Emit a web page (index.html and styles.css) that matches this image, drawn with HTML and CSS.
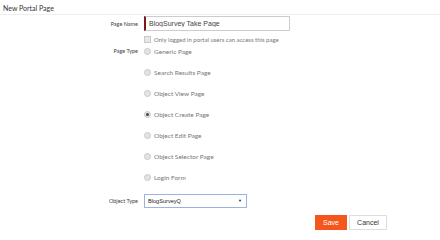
FILE: index.html
```html
<!DOCTYPE html>
<html lang="en">
<head>
    <meta charset="UTF-8">
    <meta name="viewport" content="width=device-width, initial-scale=1.0">
    <title>New Portal Page</title>
    <link rel="stylesheet" href="styles.css">
</head>
<body>
    <div class="header">New Portal Page</div>
    <form class="page-form">
        <label class="field-label" for="pageName">Page Name</label>
        <input class="text-input" type="text" id="pageName" value="BlogSurvey Take Page">

        <span></span>
        <label class="check-line"><span class="checkbox"></span>Only logged in portal users can access this page</label>

        <span class="field-label top">Page Type</span>
        <div class="radio-list">
            <label class="radio-item"><span class="radio"></span>Generic Page</label>
            <label class="radio-item"><span class="radio"></span>Search Results Page</label>
            <label class="radio-item"><span class="radio"></span>Object View Page</label>
            <label class="radio-item"><span class="radio checked"></span>Object Create Page</label>
            <label class="radio-item"><span class="radio"></span>Object Edit Page</label>
            <label class="radio-item"><span class="radio"></span>Object Selector Page</label>
            <label class="radio-item"><span class="radio"></span>Login Form</label>
        </div>

        <label class="field-label select-label" for="objectType">Object Type</label>
        <div class="select-wrap">
            <select class="select-input" id="objectType">
                <option>BlogSurveyQ</option>
            </select>
            <span class="select-arrow">&#9660;</span>
        </div>
    </form>
    <div class="actions">
        <button type="button" class="btn btn-save">Save</button>
        <button type="button" class="btn btn-cancel">Cancel</button>
    </div>
</body>
</html>
```

FILE: styles.css
```css
body {
    margin: 0;
    font-family: Lato, "Open Sans", sans-serif;
    color: #555;
    background-color: #fff;
}
.header {
    height: 15px;
    box-sizing: border-box;
    padding: 4px 3px 0;
    font-size: 7px;
    color: #333;
    border-bottom: 1px solid #eee;
}
.page-form {
    display: grid;
    grid-template-columns: 138px 146px;
    column-gap: 6px;
    row-gap: 4px;
    padding-top: 1px;
}
.field-label {
    font-size: 5.5px;
    color: #444;
    text-align: right;
    align-self: center;
}
.field-label.top {
    align-self: start;
    line-height: 8px;
}
.text-input {
    height: 15px;
    box-sizing: border-box;
    margin: 0;
    padding: 0 3px;
    border: 1px solid #ccc;
    border-left: 2px solid #7b1a1a;
    font-family: "Liberation Sans", Arial, sans-serif;
    font-size: 7px;
    color: #444;
    outline: none;
}
.check-line {
    display: flex;
    align-items: center;
    height: 8px;
    font-size: 6px;
    color: #777;
}
.checkbox {
    width: 5px;
    height: 5px;
    margin-right: 3px;
    border: 1px solid #c8c8c8;
    background-color: #e8e8e8;
}
.radio-list {
    display: flex;
    flex-direction: column;
    gap: 13px;
}
.radio-item {
    display: flex;
    align-items: center;
    height: 8px;
    font-size: 6.5px;
    color: #777;
}
.radio {
    width: 5px;
    height: 5px;
    margin-right: 3px;
    border: 1px solid #c8c8c8;
    border-radius: 50%;
    background-color: #e4e4e4;
    display: flex;
    align-items: center;
    justify-content: center;
}
.radio.checked::after {
    content: "";
    width: 3px;
    height: 3px;
    border-radius: 50%;
    background-color: #444;
}
.select-label {
    margin-top: 9px;
}
.select-wrap {
    position: relative;
    width: 103px;
    height: 14px;
    margin-top: 9px;
}
.select-input {
    display: block;
    appearance: none;
    width: 100%;
    height: 14px;
    box-sizing: border-box;
    margin: 0;
    padding: 0 3px;
    border: 1px solid #9cb4dc;
    border-radius: 0;
    background-color: #fff;
    font-family: "Liberation Sans", Arial, sans-serif;
    font-size: 5.6px;
    color: #222;
    outline: none;
}
.select-arrow {
    position: absolute;
    right: 5px;
    top: 5px;
    font-size: 4px;
    line-height: 4px;
    color: #222;
    pointer-events: none;
}
.actions {
    display: flex;
    justify-content: flex-end;
    gap: 2px;
    padding: 7px 53px 0 0;
}
.btn {
    height: 15px;
    margin: 0;
    padding: 0;
    font-family: "Liberation Sans", Arial, sans-serif;
    font-size: 7px;
    cursor: pointer;
}
.btn-save {
    width: 32px;
    border: none;
    background-color: #f4561c;
    color: #fff;
}
.btn-cancel {
    width: 38px;
    border: 1px solid #ddd;
    background-color: #fff;
    color: #333;
}
```
